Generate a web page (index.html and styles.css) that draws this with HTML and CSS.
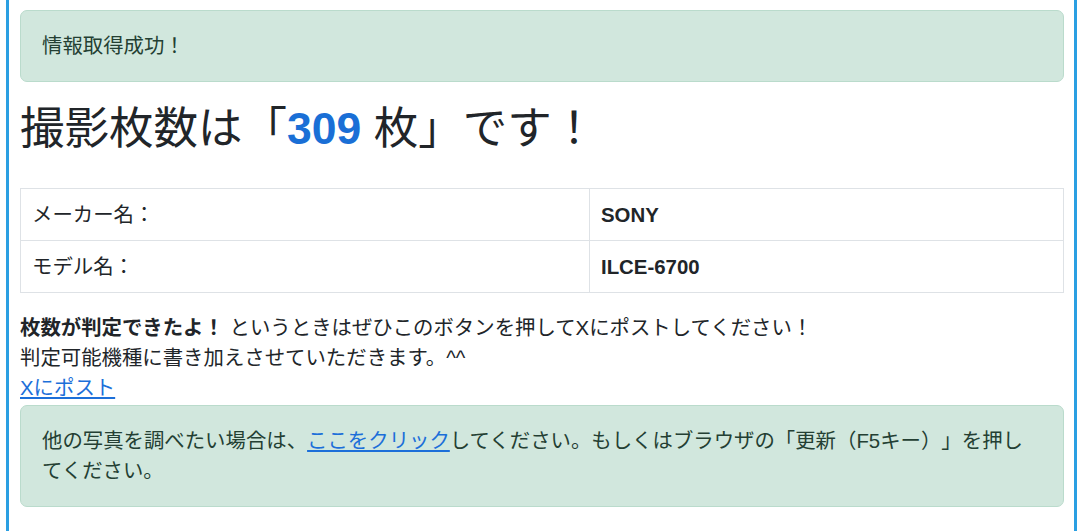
FILE: index.html
```html
<!DOCTYPE html>
<html lang="ja">
<head>
<meta charset="utf-8">
<title>撮影枚数</title>
<link rel="stylesheet" href="styles.css">
</head>
<body>
<div class="frame">
  <div class="alert">情報取得成功！</div>
  <h1 class="title">撮影枚数は「<span class="count">309</span> 枚」です！</h1>
  <table class="info">
    <tr><td class="label">メーカー名：</td><td class="value">SONY</td></tr>
    <tr><td class="label">モデル名：</td><td class="value">ILCE-6700</td></tr>
  </table>
  <p class="note"><strong>枚数が判定できたよ！</strong> というときはぜひこのボタンを押してXにポストしてください！<br>判定可能機種に書き加えさせていただきます。^^<br><a class="link" href="#">Xにポスト</a></p>
  <div class="alert alert-bottom">他の写真を調べたい場合は、<a class="link" href="#">ここをクリック</a>してください。もしくはブラウザの「更新（F5キー）」を押してください。</div>
</div>
</body>
</html>
```
FILE: styles.css
```css
html, body {
  margin: 0;
  padding: 0;
  background: #ffffff;
}
body {
  font-family: "Liberation Sans", "Noto Sans CJK JP", sans-serif;
  font-size: 20.4px;
  line-height: 30px;
  color: #212529;
  text-spacing-trim: space-all;
}
.frame {
  margin: 0 3px 0 6px;
  height: 531px;
  box-sizing: border-box;
  border-left: 3px solid #2a9fe2;
  border-right: 3px solid #2a9fe2;
  padding: 10px 10px 0 11px;
}
.alert {
  background: #d1e7dd;
  border: 1px solid #badbcc;
  border-radius: 7px;
  color: #243f33;
  padding: 20px 30px 20px 21px;
  margin: 0 0 20px 0;
}
.alert-bottom {
  margin: 2px 0 0 0;
}
.title {
  font-size: 44.5px;
  line-height: 52px;
  font-weight: 400;
  margin: 0 0 33px 0;
  padding-top: 1px;
  color: #212529;
}
.count {
  color: #1a6fd6;
  font-weight: 700;
}
.info {
  width: 100%;
  border-collapse: collapse;
  border: 1px solid #dee2e6;
  margin: 0 0 20px 0;
}
.info td {
  border: 1px solid #dee2e6;
  padding: 11px 11px 10px 11px;
  line-height: 30px;
}
.label {
  width: 546px;
}
.value {
  font-weight: 700;
}
.note {
  margin: 0;
}
.note strong {
  font-weight: 700;
}
.link {
  color: #1c6fd9;
  text-decoration: underline;
}
```
